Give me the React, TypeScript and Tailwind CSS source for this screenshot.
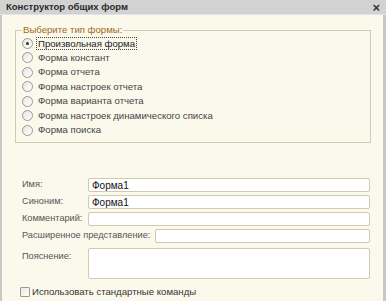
const options = [
  "Произвольная форма",
  "Форма констант",
  "Форма отчета",
  "Форма настроек отчета",
  "Форма варианта отчета",
  "Форма настроек динамического списка",
  "Форма поиска",
];

function Radio({ checked }: { checked?: boolean }) {
  return (
    <span className="flex h-[11px] w-[11px] shrink-0 items-center justify-center rounded-full border border-[#9a9a90] bg-gradient-to-br from-[#e6e6e0] to-white">
      {checked && <span className="h-[3px] w-[3px] rounded-full bg-[#333]" />}
    </span>
  );
}

function Field({ label, value, wide }: { label: string; value?: string; wide?: boolean }) {
  return (
    <div className="flex h-[14px] items-center">
      <span
        className={
          wide
            ? "w-[133px] shrink-0 whitespace-nowrap text-[9.2px] text-[#555]"
            : "w-[66px] shrink-0 whitespace-nowrap text-[9.2px] text-[#555]"
        }
      >
        {label}
      </span>
      <div className="flex h-full flex-1 items-center rounded-[2px] border border-[#cfcab0] bg-white pl-[3px] text-[10px] text-[#111]">
        {value}
      </div>
    </div>
  );
}

export default function App() {
  return (
    <div
      className="flex h-[301px] w-[386px] flex-col overflow-hidden bg-[#fbf9ec] text-[9.6px]"
      style={{ fontFamily: '"Liberation Sans", Arial, sans-serif' }}
    >
      <div className="flex h-[15px] shrink-0 items-center justify-between border-b border-[#e4e4e4] bg-[#d2d2d2] pl-[6px] pr-[6px]">
        <span className="text-[9.5px] font-bold text-[#2a2a2a]">Конструктор общих форм</span>
        <span className="text-[13px] font-bold leading-none text-[#333]">×</span>
      </div>
      <div className="flex flex-1 flex-col border-l-2 border-r-[3px] border-[#c8c8c4] pl-[13px] pr-[12px]">
        <fieldset className="mt-[10px] h-[118px] border border-[#cfcbb5] pl-[6px] pr-2">
          <legend className="px-[1px] leading-[10px] text-[#a0681c]">Выберите тип формы:</legend>
          <div className="mt-[1px] flex flex-col">
            {options.map((o, i) => (
              <div key={o} className="flex h-[14.5px] items-center gap-[3px]">
                <Radio checked={i === 0} />
                <span
                  className={
                    i === 0
                      ? "border border-dotted border-[#444] px-[1px] leading-[11px] text-[#222]"
                      : "px-[2px] text-[#444]"
                  }
                >
                  {o}
                </span>
              </div>
            ))}
          </div>
        </fieldset>
        <div className="mt-[35px] flex flex-col gap-[3px] pl-[7px] pr-[1px]">
          <Field label="Имя:" value="Форма1" />
          <Field label="Синоним:" value="Форма1" />
          <Field label="Комментарий:" />
          <Field label="Расширенное представление:" wide />
          <div className="mt-[2px] flex h-[31px]">
            <span className="w-[66px] shrink-0 pt-[2px] text-[9.2px] text-[#555]">Пояснение:</span>
            <div className="flex-1 rounded-[2px] border border-[#cfcab0] bg-white" />
          </div>
          <div className="mt-[3px] -ml-[2px] flex items-center gap-[2px]">
            <span className="h-[10px] w-[10px] rounded-[1px] border border-[#9a9a90] bg-gradient-to-br from-[#e6e6e0] to-white" />
            <span className="text-[#333]">Использовать стандартные команды</span>
          </div>
        </div>
      </div>
    </div>
  );
}
